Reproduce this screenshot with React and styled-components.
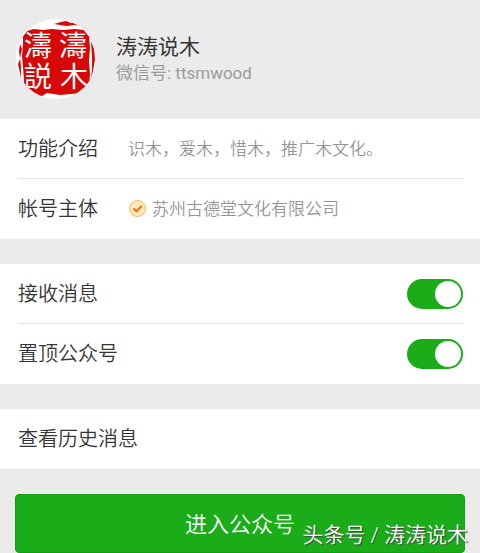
import React from 'react';
import styled, { createGlobalStyle } from 'styled-components';

const GlobalStyle = createGlobalStyle`
  * { box-sizing: border-box; }
  body {
    margin: 0;
    background: #ebebeb;
    color: #353535;
    font-family: Roboto, "Noto Sans CJK SC", sans-serif;
    font-weight: 350;
  }
`;

const Page = styled.main`
  position: relative;
  display: flex;
  flex-direction: column;
`;

const Profile = styled.header`
  display: flex;
  align-items: center;
  gap: 20px;
  padding: 19px 16px 20px;
`;

const Avatar = styled.svg`
  width: 80px;
  height: 80px;
  flex: none;
`;

const Name = styled.h1`
  margin: 0;
  font-size: 21px;
  line-height: 28px;
  font-weight: 400;
`;

const Account = styled.p`
  margin: 0;
  font-size: 17px;
  line-height: 24px;
  font-weight: 400;
  color: #9c9c9c;
`;

const Card = styled.section`
  margin-bottom: 25px;
  padding: 0 17px 0 18px;
  background: #fff;
`;

const Row = styled.div`
  display: flex;
  align-items: center;
  height: 60px;
  font-size: 20px;
  line-height: 28px;

  &:not(:last-child) { border-bottom: 1px solid #e4e4e4; }
`;

const Label = styled.span`
  width: 110px;
  flex: none;
`;

const Value = styled.span`
  display: flex;
  align-items: center;
  gap: 5px;
  font-size: 17px;
  color: #969696;
`;

const SwitchLabel = styled.label`
  flex: 1;
`;

const Switch = styled.input.attrs({ type: 'checkbox' })`
  appearance: none;
  display: flex;
  align-items: center;
  width: 56px;
  height: 30px;
  margin: 0;
  padding: 0 2px;
  border-radius: 15px;
  background: #c8c8c8;
  cursor: pointer;

  &::before {
    content: "";
    width: 26px;
    height: 26px;
    border-radius: 50%;
    background: #fff;
  }

  &:checked {
    justify-content: flex-end;
    background: #1aad19;
  }
`;

const HistoryLink = styled.a`
  flex: 1;
  color: inherit;
  text-decoration: none;
`;

const EnterButton = styled.button`
  height: 59px;
  margin: 0 15px;
  padding: 0 0 3px;
  border: 1px solid #179b16;
  border-radius: 4px;
  background: #1aad19;
  color: #fff;
  font: inherit;
  font-size: 22px;
  cursor: pointer;
`;

const Watermark = styled.span`
  position: absolute;
  right: 12px;
  bottom: 2px;
  color: #fff;
  font-size: 21px;
  line-height: 32px;
  text-shadow: 1px 1px 1px #444;
  pointer-events: none;
`;

function SealAvatar() {
  return (
    <Avatar viewBox="0 0 80 80" role="img" aria-label="濤濤説木">
      <defs>
        <clipPath id="round"><circle cx="40" cy="40" r="40" /></clipPath>
      </defs>
      <g clipPath="url(#round)">
        <rect width="80" height="80" fill="#fff" />
        <path d="M38 5 L45 3 50 2 55 4 60 3 66 7 58 6 51 7 44 6Z" fill="#d60808" />
        <path d="M7 13 L18 10 27 11 36 10 47 11 59 10 68 11 73 17 74 29 73 42 74 55 73 67 67 74 55 75 44 76 31 74 26 77 17 75 7 68 8 61 7 48 6 37 7 25Z" fill="#d60808" />
        <path d="M75 22 L78 30 79 40 77 52 75 60 76 50 76 38Z" fill="#d60808" />
        <path d="M4 25 L3 32 4 40 2 45 4 54 5 60 5 48 4 39 6 30Z" fill="#d60808" />
        <g fill="#fff" fontFamily="Noto Sans CJK TC, sans-serif" fontSize="28" fontWeight="400">
          <text x="8" y="37">濤</text>
          <text x="43" y="37">濤</text>
          <text x="8" y="68">説</text>
          <text x="44" y="68">木</text>
        </g>
      </g>
    </Avatar>
  );
}

function VerifiedIcon() {
  return (
    <svg width="19" height="19" viewBox="0 0 19 19" aria-hidden="true">
      <circle cx="9.5" cy="8.5" r="8" fill="#ffe9b8" stroke="#f2b866" strokeWidth="1" />
      <path d="M5.5 8.5 L8.5 11.3 13.8 5.8" fill="none" stroke="#ea7415" strokeWidth="2" />
    </svg>
  );
}

export default function App() {
  return (
    <>
      <GlobalStyle />
      <Page>
        <Profile>
          <SealAvatar />
          <div>
            <Name>涛涛说木</Name>
            <Account>微信号: ttsmwood</Account>
          </div>
        </Profile>
        <Card>
          <Row>
            <Label>功能介绍</Label>
            <Value>识木，爱木，惜木，推广木文化。</Value>
          </Row>
          <Row>
            <Label>帐号主体</Label>
            <Value><VerifiedIcon />苏州古德堂文化有限公司</Value>
          </Row>
        </Card>
        <Card>
          <Row>
            <SwitchLabel htmlFor="receive">接收消息</SwitchLabel>
            <Switch id="receive" defaultChecked />
          </Row>
          <Row>
            <SwitchLabel htmlFor="pin">置顶公众号</SwitchLabel>
            <Switch id="pin" defaultChecked />
          </Row>
        </Card>
        <Card>
          <Row><HistoryLink href="#history">查看历史消息</HistoryLink></Row>
        </Card>
        <EnterButton type="button">进入公众号</EnterButton>
        <Watermark>头条号 / 涛涛说木</Watermark>
      </Page>
    </>
  );
}
